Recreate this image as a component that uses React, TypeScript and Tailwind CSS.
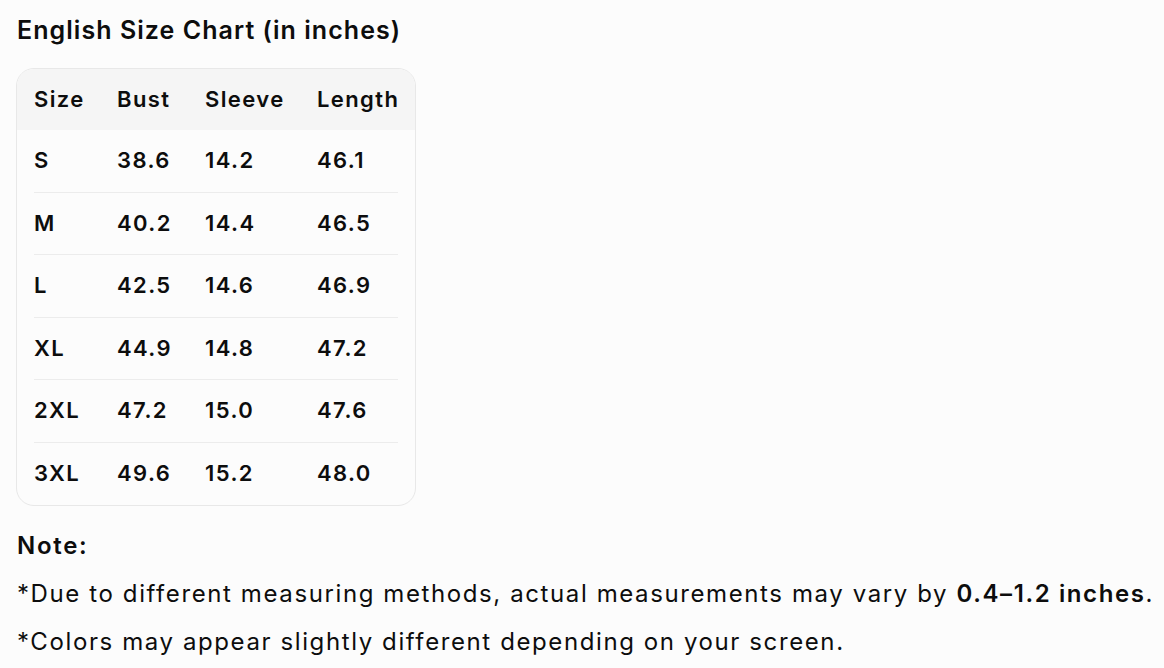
import React from "react";

const rows = [
  ["S", "38.6", "14.2", "46.1"],
  ["M", "40.2", "14.4", "46.5"],
  ["L", "42.5", "14.6", "46.9"],
  ["XL", "44.9", "14.8", "47.2"],
  ["2XL", "47.2", "15.0", "47.6"],
  ["3XL", "49.6", "15.2", "48.0"],
];

export default function App() {
  return (
    <div
      className="w-[1164px] h-[668px] bg-[#fcfcfc] text-[#0d0d0d] overflow-hidden"
      style={{ fontFamily: "Inter, 'Noto Sans', sans-serif" }}
    >
      <div className="pl-[17px] pt-[13px]">
        <h1 className="text-[25px] leading-[34px] font-semibold tracking-[1.05px] whitespace-nowrap">
          English Size Chart (in inches)
        </h1>
        <div className="mt-[21px] w-[400px] border border-[#e8e8e8] rounded-[18px] overflow-hidden -ml-[1px]">
          <div className="bg-[#f5f5f5] px-[17px] h-[61px] grid grid-cols-[83px_88px_112px_1fr] items-center text-[22px] font-semibold tracking-[1.4px] whitespace-nowrap">
            <div>Size</div>
            <div>Bust</div>
            <div>Sleeve</div>
            <div>Length</div>
          </div>
          <div className="px-[17px]">
            {rows.map((r, i) => (
              <div
                key={i}
                className={`grid grid-cols-[83px_88px_112px_1fr] items-center h-[62.5px] text-[22px] font-semibold tracking-[1.4px] ${
                  i < rows.length - 1 ? "border-b border-[#ececec]" : ""
                }`}
              >
                {r.map((c, j) => (
                  <div key={j}>{c}</div>
                ))}
              </div>
            ))}
          </div>
        </div>
        <div className="mt-[16px] text-[24px] leading-[48px] tracking-[1.6px] whitespace-nowrap">
          <p className="font-semibold tracking-[1.7px]">Note:</p>
          <p>
            *Due to different measuring methods, actual measurements may vary by{" "}
            <span className="font-semibold">0.4–1.2 inches</span>.
          </p>
          <p>*Colors may appear slightly different depending on your screen.</p>
        </div>
      </div>
    </div>
  );
}
